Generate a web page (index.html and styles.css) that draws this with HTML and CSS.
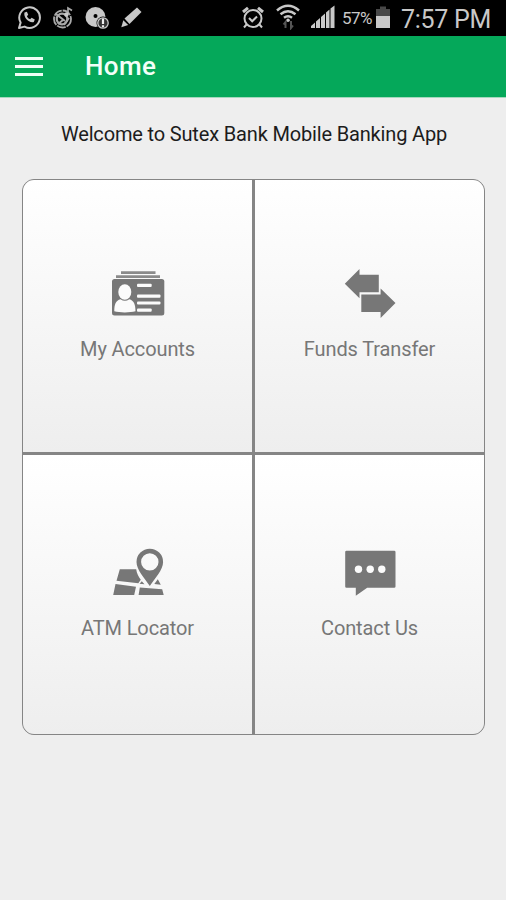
FILE: index.html
```html
<!DOCTYPE html>
<html lang="en">
<head>
  <meta charset="UTF-8" />
  <meta name="viewport" content="width=device-width, initial-scale=1.0" />
  <title>Sutex Bank</title>
  <link rel="stylesheet" href="styles.css">
</head>
<body>
  <div class="status-bar">
    <div class="status-left">
      <svg width="24" height="24" viewBox="0 0 24 24" fill="none" stroke="#c8c8c8" stroke-width="2">
        <path d="M2 22l1.6-5.4A10.3 10.3 0 1 1 7.6 20.600z" stroke-linejoin="round"/>
        <path d="M7.500 6.500c-1.500 4.500 4.500 11 9.300 9.600l1-2.600-3.200-1.700-1.500 1.500c-1.500-.6-2.500-1.600-3.200-3.100l1.300-1.500-1.300-2.900z" fill="#c8c8c8" stroke="none"/>
      </svg>
      <svg width="22" height="24" viewBox="0 0 22 24" fill="none" stroke="#a8a8a8">
        <circle cx="10.500" cy="13" r="8.500" stroke-width="1.800" stroke-dasharray="9 1"/>
        <circle cx="10" cy="13" r="5.300" stroke-width="2.200"/>
        <path d="M4 8l9 7M17 12l-5 7M6 18l5-4" stroke-width="2"/>
        <path d="M16 8V2l4 2.500" stroke-width="1.700"/>
        <circle cx="14.500" cy="8.500" r="2.200" fill="#c8c8c8" stroke="none"/>
      </svg>
      <svg width="25" height="24" viewBox="0 0 25 24">
        <circle cx="10.500" cy="11" r="10" fill="#c8c8c8"/>
        <circle cx="10.500" cy="10" r="2" fill="#000"/>
        <circle cx="18" cy="17" r="6.500" fill="#000"/>
        <circle cx="18" cy="17" r="5.200" fill="#333" stroke="#c8c8c8" stroke-width="1.300"/>
        <path d="M18 12.500v5.500M18 19.300v2" stroke="#eee" stroke-width="2.200"/>
      </svg>
      <svg width="22" height="24" viewBox="0 0 22 24" fill="#c8c8c8">
        <path d="M3.500 12.500L16 1.500l4.500 4.500L8.500 18z"/>
        <path d="M2.300 14.300l4.900 4.800L.3 21.300z"/>
      </svg>
    </div>
    <div class="status-right">
      <svg class="alarm" width="24" height="24" viewBox="0 0 24 24" fill="none" stroke="#c8c8c8" stroke-width="2">
        <circle cx="12" cy="12.500" r="8.500"/>
        <path d="M8 12l3.200 3.300L16 10.500M5.500 18.500L3 21.500M18.500 18.500l2.500 3"/>
        <path d="M2 6L7 1.800M17 1.800L22 6" stroke-width="3"/>
      </svg>
      <svg class="wifi" width="24" height="26" viewBox="0 0 24 26" fill="none" stroke="#c8c8c8" stroke-width="2.500">
        <path d="M1 6.500Q12-3 23 6.500M4.500 10.200q7.500-6 15 0M8 13.800q4-3 8 0"/>
        <circle cx="12" cy="16.200" r="1.800" fill="#c8c8c8" stroke="none"/>
        <path d="M9.500 24v-6l-2 2.500M15 17v7l2-2.500" stroke="#555" stroke-width="2"/>
      </svg>
      <svg class="signal" width="24" height="24" viewBox="0 0 24 24" fill="#c8c8c8">
        <path d="M0 23v-2l4-3.500v5.500zM5 23v-6.500l4-3.500v10zM10 23v-11l4-3.500v14.500zM15 23V7.500l3.500-3v18.500zM19.500 23V3.500L23.500.5v22.500z"/>
      </svg>
      <span class="percent">57%</span>
      <svg class="battery" width="14" height="24" viewBox="0 0 14 24">
        <path d="M0 4h4V1.500h6V4h4v7H0z" fill="#484848"/>
        <path d="M0 11h14v12H0z" fill="#c8c8c8"/>
      </svg>
      <span class="clock">7:57 PM</span>
    </div>
  </div>

  <header class="toolbar">
    <button class="menu-button" aria-label="Menu">
      <span></span>
      <span></span>
      <span></span>
    </button>
    <h1>Home</h1>
  </header>

  <main>
    <p class="welcome">Welcome to Sutex Bank Mobile Banking App</p>

    <div class="menu-grid">
      <a class="menu-item">
        <svg class="icon" viewBox="0 0 56 50">
          <path d="M11 2.300h34.500V5H11zM6 6.300h44V9H6z" opacity=".85"/>
          <rect x="2" y="10" width="52.300" height="36.500" rx="2.500"/>
          <g fill="#fbfbfb">
            <ellipse cx="14.800" cy="23" rx="6.500" ry="7.700"/>
            <path d="M4.300 42.300c0-7 1.500-10.800 6.200-12 3 2 5.800 2 8.800 0 4.500 1.200 6.200 5 6.200 12-5.500 1.500-16 1.500-21.200 0z"/>
            <rect x="27" y="14.800" width="14.700" height="3.200" rx="1"/>
            <rect x="27" y="25.500" width="23.500" height="3.200" rx="1"/>
            <rect x="27" y="32.400" width="23.500" height="3.200" rx="1"/>
            <rect x="27" y="39.600" width="14.700" height="3.200" rx="1"/>
          </g>
        </svg>
        <span class="label">My Accounts</span>
      </a>
      <a class="menu-item">
        <svg class="icon" viewBox="0 0 56 50">
          <path d="M2.800 14.700L17.500 0v5.700h19.300v17.600H17.500v6z"/>
          <path d="M19.300 25.400h19.300v-6L53.500 34 38.600 49v-6H19.300z"/>
        </svg>
        <span class="label">Funds Transfer</span>
      </a>
      <a class="menu-item">
        <svg class="icon" viewBox="0 0 56 50">
          <path d="M9.800 21.300h16.400c.5 4 2.500 7.500 4.600 10.500l-2.500 3.500L6.500 32.700z"/>
          <path d="M5.500 36l20.500 2.700L24.200 47H3.200zM29.800 39.500l22.400 1.800L53.700 47H28.600zM47.800 31.300l3 5.500-6.500-.8zM31.800 33.300l2.700 3-5-.5z"/>
          <path fill-rule="evenodd" d="M39.800 38C35 30.500 26.500 22 26.500 14a13.300 13.300 0 0 1 26.600 0c0 8-8.500 16.500-13.300 24zM39.800 5.200a8.700 8.700 0 1 0 0 17.400 8.700 8.700 0 0 0 0-17.400z"/>
        </svg>
        <span class="label">ATM Locator</span>
      </a>
      <a class="menu-item">
        <svg class="icon" viewBox="0 0 56 50">
          <path d="M4.500 2.700h47.700q1.300 0 1.300 1.300v34.400q0 1.300-1.300 1.300h-27l-11.400 8v-8H4.500q-1.300 0-1.300-1.300V4q0-1.300 1.300-1.300z"/>
          <g fill="#fbfbfb">
            <circle cx="16.500" cy="21.300" r="3.700"/>
            <circle cx="28.200" cy="21.300" r="3.700"/>
            <circle cx="39.800" cy="21.300" r="3.700"/>
          </g>
        </svg>
        <span class="label">Contact Us</span>
      </a>
    </div>
  </main>
</body>
</html>
```
FILE: styles.css
```css
:root {
  --green: #05a85a;
  --page-bg: #eeeeee;
  --line: #858585;
  --icon: #777777;
}

* {
  box-sizing: border-box;
}

body {
  margin: 0;
  height: 900px;
  font-family: Roboto, sans-serif;
  background-color: var(--page-bg);
  overflow: hidden;
}

svg {
  display: block;
  flex-shrink: 0;
}

.status-bar {
  display: flex;
  justify-content: space-between;
  height: 36px;
  padding: 6px 15px 0 17px;
  background-color: #000;
  color: #c8c8c8;
}

.status-left {
  display: flex;
  gap: 11px;
}

.status-right {
  display: flex;
}

.wifi {
  margin: -2px 0 0 11px;
}

.signal {
  margin: -1px 0 0 11px;
}

.percent {
  width: 31px;
  margin-left: 7px;
  font-size: 17px;
  line-height: 25px;
  letter-spacing: -0.5px;
}

.battery {
  margin: -1px 1px 0 3px;
}

.clock {
  width: 90px;
  margin-left: 10px;
  font-size: 25px;
  line-height: 27px;
  letter-spacing: -0.3px;
  white-space: nowrap;
}

.toolbar {
  display: flex;
  align-items: center;
  height: 62px;
  padding-left: 15px;
  background-color: var(--green);
  border-bottom: 1px solid #a5d8bd;
}

.menu-button {
  display: flex;
  flex-direction: column;
  gap: 5px;
  width: 28px;
  padding: 0;
  border: none;
  background: none;
}

.menu-button span {
  width: 28px;
  height: 3px;
  background-color: #eefff5;
}

h1 {
  margin: 0 0 2px 42px;
  font-size: 26px;
  font-weight: 500;
  line-height: 30px;
  letter-spacing: 0.4px;
  color: #f3fff8;
}

.welcome {
  margin: 0;
  padding: 24px 0 0 2px;
  height: 81px;
  font-size: 20px;
  line-height: 24px;
  letter-spacing: -0.16px;
  text-align: center;
  white-space: nowrap;
  color: #1c1c1c;
}

.menu-grid {
  display: grid;
  grid-template-columns: 229px 229px;
  grid-template-rows: 272px 279px;
  gap: 3px;
  width: 463px;
  margin-left: 22px;
  border: 1px solid var(--line);
  border-radius: 12px;
  background-color: var(--line);
  overflow: hidden;
}

.menu-item {
  display: flex;
  flex-direction: column;
  align-items: center;
  justify-content: center;
  padding-bottom: 2px;
  background: linear-gradient(#ffffff, #eeeeee);
}

.icon {
  width: 56px;
  height: 50px;
  margin-bottom: 18px;
  fill: var(--icon);
}

.label {
  font-size: 20px;
  line-height: 24px;
  letter-spacing: -0.12px;
  color: var(--icon);
}
```
